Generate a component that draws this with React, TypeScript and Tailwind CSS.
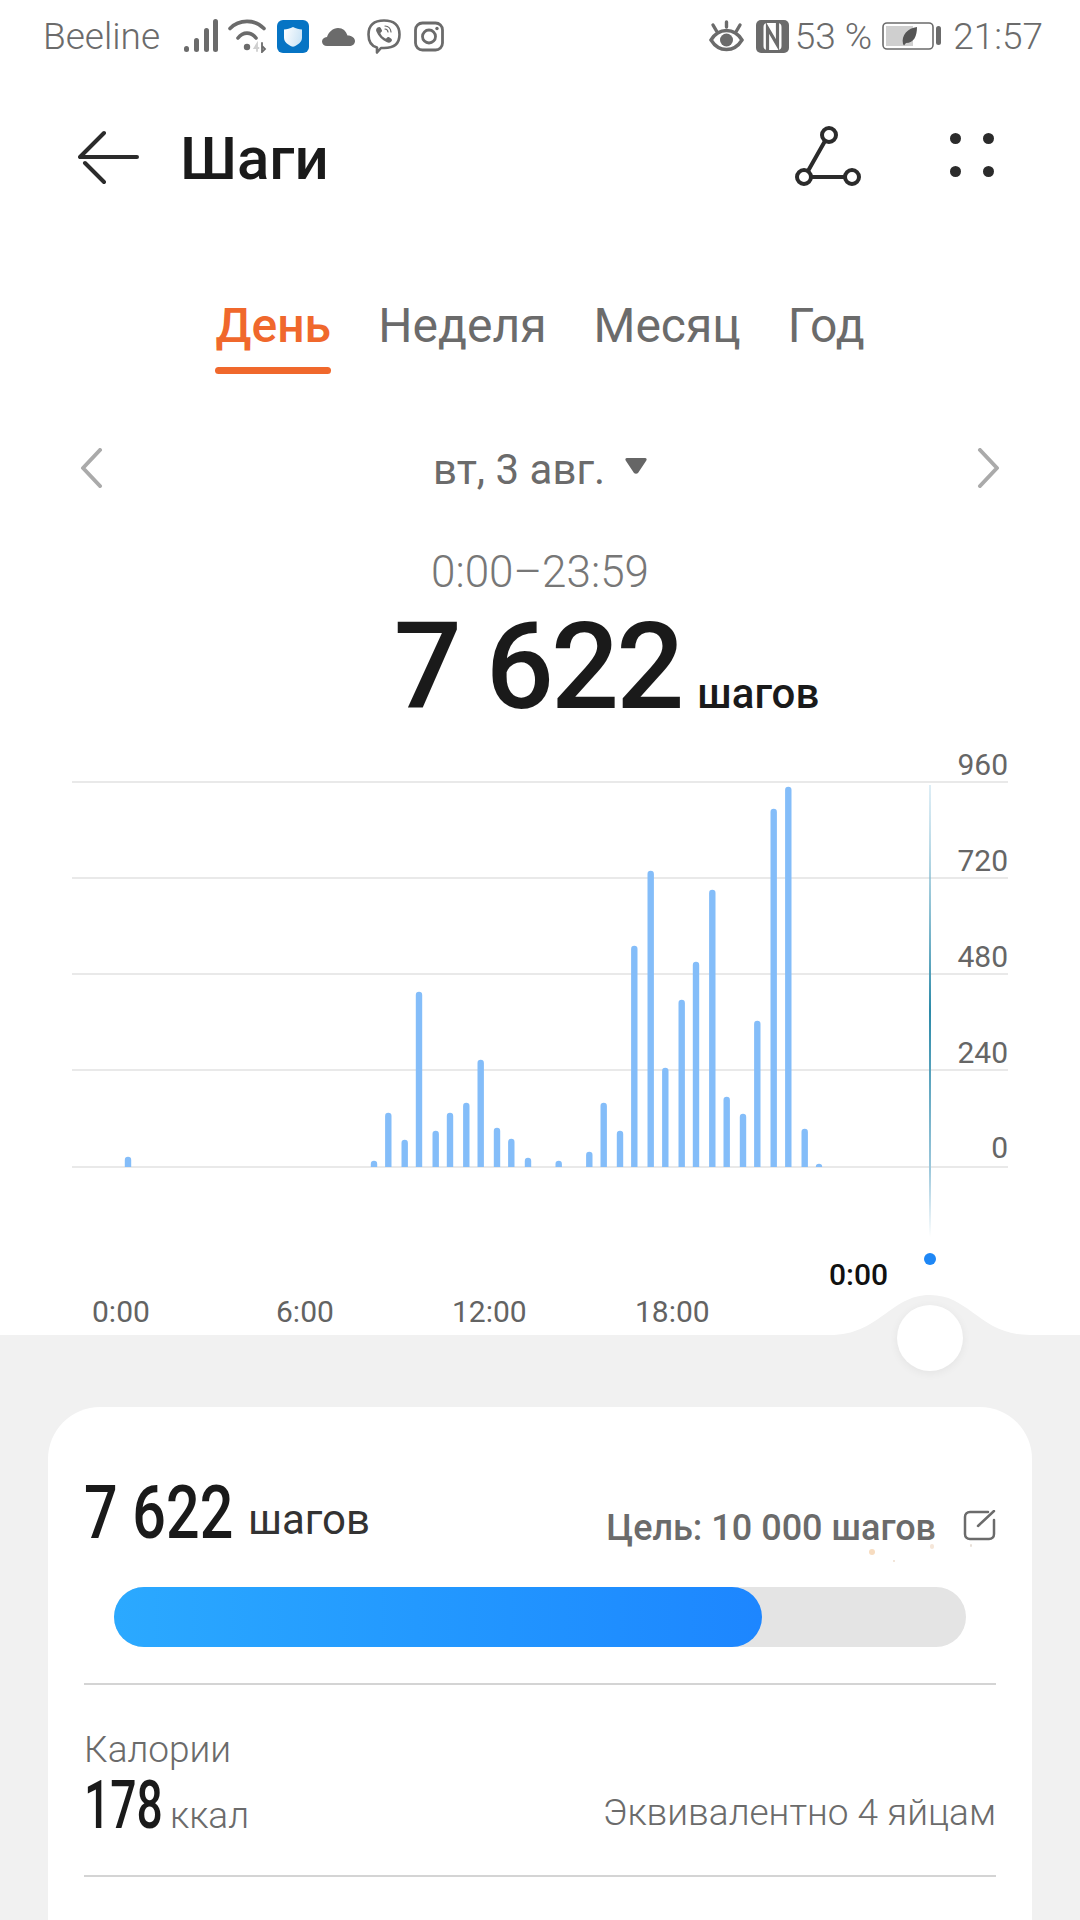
import React from "react";

const bars: [number, number][] = [
  [128, 1157], [374, 1161], [388.3, 1113], [404.7, 1140], [419, 992], [435.7, 1131], [450, 1113], [466.3, 1103], [480.7, 1060],
  [497, 1128], [511.3, 1139], [528, 1158], [558.7, 1161], [589.3, 1152], [603.7, 1103], [620, 1131], [634.3, 946], [650.7, 871],
  [665.3, 1068], [681.7, 1000], [696, 962], [712.3, 890], [726.7, 1097], [743, 1114], [757.3, 1021], [773.7, 809], [788.3, 787],
  [804.7, 1129], [819, 1164],
];

function Signal() {
  return (
    <svg width="36" height="34" viewBox="0 0 36 34" fill="#6b6b6b">
      <rect x="0" y="27" width="5" height="6" rx="2.5" />
      <rect x="10" y="19" width="5" height="14" rx="2.5" />
      <rect x="20" y="9" width="5" height="24" rx="2.5" />
      <rect x="29" y="0" width="5" height="33" rx="2.5" />
    </svg>
  );
}
function Wifi() {
  return (
    <svg width="40" height="34" viewBox="0 0 40 34" fill="none" stroke="#6b6b6b" strokeWidth="3.6" strokeLinecap="round">
      <path d="M2 9.500C11 0 27 0 36 9.500" />
      <path d="M10 19C15 12.500 23 12.500 28 19" />
      <circle cx="19" cy="28" r="3.200" fill="#6b6b6b" stroke="none" />
      <path d="M29 32v-7l-2.500 4h4" stroke="#cfcfcf" strokeWidth="1.800" />
      <path d="M34 24v9l3-3-3-3" strokeWidth="1.800" />
    </svg>
  );
}
function Shield() {
  return (
    <svg width="32" height="33" viewBox="0 0 32 33">
      <defs>
        <linearGradient id="sh" x1="0" y1="0" x2="1" y2="0.3">
          <stop offset="0" stopColor="#ffffff" />
          <stop offset="1" stopColor="#cfe6f6" />
        </linearGradient>
      </defs>
      <rect width="32" height="33" rx="6" fill="#0674c4" />
      <path d="M16 7c3 1.600 6 2.400 9 2.400v8c0 4.600-4 7.600-9 9.400-5-1.800-9-4.800-9-9.400v-8c3 0 6-.8 9-2.400z" fill="url(#sh)" />
    </svg>
  );
}
function Cloud() {
  return (
    <svg className="mt-[2px]" width="33" height="18" viewBox="0 0 33 18" fill="#6b6b6b">
      <path d="M5 18C2 18 0 16 0 13.500S2 9.500 5 9c1.500-5 6-9 11-9 5 0 8 3 9.500 7.500C30 7.500 33 10 33 13s-2.500 5-6 5z" />
    </svg>
  );
}
function Viber() {
  return (
    <svg width="34" height="35" viewBox="0 0 34 35" fill="none" stroke="#6b6b6b">
      <path d="M10 28.500C4 27 1.500 23 1.500 15.500 1.500 6 7 1.500 17 1.500S32.500 6 32.500 15.500 27 29 17 29c-1 0-2 0-3 0l-4 4.500z" strokeWidth="2.600" strokeLinejoin="round" />
      <path d="M10.500 8.500c1.500-1 2.500-.8 3.300.6l1 1.800c.5 1 .2 1.700-.8 2.400-.7.500-.7 1-.3 1.800 1 1.800 2.300 3.200 4.200 4.200.8.400 1.300.300 1.800-.4.700-1 1.500-1.200 2.500-.6l1.800 1.100c1.200.8 1.300 1.900.3 3-1.200 1.400-2.700 1.600-4.300.9-5.200-2.300-8.700-5.800-10.700-11-.6-1.500 0-2.800 1.200-3.800z" fill="#6b6b6b" stroke="none" />
      <path d="M18 7c3.500.3 5.700 2.500 6 6M18 10c1.800.2 2.800 1.200 3 3" strokeWidth="1.200" strokeLinecap="round" />
    </svg>
  );
}
function Instagram() {
  return (
    <svg width="30" height="31" viewBox="0 0 30 31" fill="none" stroke="#6b6b6b" strokeWidth="2.800">
      <rect x="1.500" y="2" width="27" height="27" rx="7" />
      <circle cx="15" cy="15.500" r="6.500" />
      <circle cx="23" cy="7.500" r="1.700" fill="#6b6b6b" stroke="none" />
    </svg>
  );
}
function Eye() {
  return (
    <svg width="35" height="32" viewBox="0 0 35 32" fill="none" stroke="#6b6b6b" strokeWidth="3.400" strokeLinecap="round">
      <path d="M2 20C6 13.500 11 10.500 17.500 10.500S29 13.500 33 20c-4 6.500-9 9.500-15.500 9.500S6 26.500 2 20z" />
      <circle cx="17.500" cy="20" r="6.500" fill="#6b6b6b" stroke="none" />
      <path d="M17.500 2v5M4 5l3.500 6M31 5l-3.500 6" />
    </svg>
  );
}
function Nfc() {
  return (
    <svg width="33" height="33" viewBox="0 0 33 33">
      <rect width="33" height="33" rx="5" fill="#6b6b6b" />
      <rect x="7.500" y="3" width="18" height="27" rx="4" fill="#fff" />
      <path d="M11.500 30V8L21.500 25V3" fill="none" stroke="#6b6b6b" strokeWidth="3.200" />
    </svg>
  );
}
function Battery() {
  return (
    <svg width="59" height="28" viewBox="0 0 59 28">
      <rect x="1" y="1" width="50" height="26" rx="4" fill="none" stroke="#6b6b6b" strokeWidth="1.600" />
      <rect x="4" y="4" width="27" height="20" fill="#cfcfcf" />
      <path d="M21 22c-2-9 5-16 14-17 0 9-3 16-11 16l-2 2.500z" fill="#555555" />
      <rect x="54" y="4" width="5" height="19" rx="2.500" fill="#6b6b6b" />
    </svg>
  );
}

export default function App() {
  return (
    <div className="relative flex h-[1920px] w-[1080px] flex-col overflow-hidden bg-white font-[Roboto,sans-serif] text-[#6b6b6b]">
      {/* status bar */}
      <div className="flex h-[72px] shrink-0 items-center pl-[43px] pr-[37px] text-[37px] font-light">
        <span className="w-[141px] leading-none">Beeline</span>
        <Signal />
        <span className="ml-[8px]"><Wifi /></span>
        <span className="ml-[9px]"><Shield /></span>
        <span className="ml-[13px]"><Cloud /></span>
        <span className="ml-[12px]"><Viber /></span>
        <span className="ml-[13px]"><Instagram /></span>
        <span className="ml-auto"><Eye /></span>
        <span className="ml-[12px]"><Nfc /></span>
        <span className="ml-[6px] leading-none">53 %</span>
        <span className="ml-[10px]"><Battery /></span>
        <span className="ml-[12px] leading-none">21:57</span>
      </div>

      {/* app bar */}
      <div className="flex h-[226px] shrink-0 items-start pl-[78px] pr-[86px] pt-[57px]">
        <svg className="mt-[1px]" width="62" height="58" viewBox="0 0 62 58" fill="none" stroke="#2b2b2b" strokeWidth="4" strokeLinecap="round" strokeLinejoin="round">
          <path d="M2 27H59M2 27L26 3M7 33L26 52" />
        </svg>
        <h1 className="ml-[40px] mt-[-4px] text-[60px] font-medium leading-[68px] text-[#1a1a1a]">Шаги</h1>
        <svg className="ml-auto mt-[-4px]" width="68" height="64" viewBox="0 0 68 64" fill="none" stroke="#2b2b2b" strokeWidth="4">
          <circle cx="35" cy="10" r="7" />
          <circle cx="10" cy="52" r="7" />
          <circle cx="58" cy="52" r="7" />
          <path d="M31 16L14 46M17 52H51" />
        </svg>
        <svg className="ml-[88px] mt-[4px]" width="44" height="44" viewBox="0 0 44 44" fill="#2b2b2b">
          <circle cx="5.500" cy="5.500" r="5.500" />
          <circle cx="38.500" cy="5.500" r="5.500" />
          <circle cx="5.500" cy="38.500" r="5.500" />
          <circle cx="38.500" cy="38.500" r="5.500" />
        </svg>
      </div>

      {/* tabs */}
      <div className="flex h-[134px] shrink-0 justify-center text-[48px] leading-[56px]">
        <div className="flex w-[116px] flex-col items-center font-medium text-[#f0682c]">
          <span>День</span>
          <span className="mt-[13px] h-[7px] w-full rounded-full bg-[#f0682c]" />
        </div>
        <span className="ml-[47px]">Неделя</span>
        <span className="ml-[47px]">Месяц</span>
        <span className="ml-[47px]">Год</span>
      </div>

      {/* date */}
      <div className="flex h-[76px] shrink-0 items-center justify-between px-[79px]">
        <svg className="mb-[4px]" width="24" height="40" viewBox="0 0 24 40" fill="none" stroke="#aaaaaa" strokeWidth="4" strokeLinecap="round" strokeLinejoin="round">
          <path d="M21 2L4 20L21 38" />
        </svg>
        <div className="flex items-center text-[42px] leading-[48px]">
          <span>вт, 3 авг.</span>
          <svg className="mb-[8px] ml-[20px]" width="22" height="16" viewBox="0 0 22 16" fill="#666666">
            <path d="M2 0H20C22 0 22 2 21 3L13 15C12 16 10 16 9 15L1 3C0 2 0 0 2 0Z" />
          </svg>
        </div>
        <svg className="mb-[4px]" width="24" height="40" viewBox="0 0 24 40" fill="none" stroke="#aaaaaa" strokeWidth="4" strokeLinecap="round" strokeLinejoin="round">
          <path d="M3 2L20 20L3 38" />
        </svg>
      </div>

      {/* totals */}
      <div className="mt-[40px] shrink-0 text-center text-[44px] font-light leading-[48px] text-[#777777]">0:00–23:59</div>
      <div className="mt-[16px] flex h-[124px] shrink-0 items-baseline justify-center pl-[133px] text-[#1a1a1a]">
        <span className="text-[120px] font-medium leading-[110px] tracking-[-3px]">7 622</span>
        <span className="ml-[16px] text-[42px] font-medium leading-none">шагов</span>
      </div>

      {/* chart */}
      <div className="relative h-[599px] shrink-0">
        <svg className="absolute inset-0" width="1080" height="599" viewBox="0 736 1080 599">
          <defs>
            <linearGradient id="cursor" x1="0" y1="0" x2="0" y2="1">
              <stop offset="0" stopColor="#bcdcec" stopOpacity="0.5" />
              <stop offset="0.5" stopColor="#2c8aa8" />
              <stop offset="0.85" stopColor="#9cc8dc" />
              <stop offset="1" stopColor="#ffffff" />
            </linearGradient>
          </defs>
          {[782, 878, 974, 1070, 1167].map((y) => (
            <rect key={y} x="72" y={y - 0.75} width="936" height="1.5" fill="#e2e2e2" />
          ))}
          {bars.map(([x, top]) => (
            <path key={x} d={`M${x - 3.2} 1167V${top + 3}a3.200 3.200 0 0 1 6.400 0V1167Z`} fill="#84bdf9" />
          ))}
          <rect x="929" y="785" width="2" height="452" fill="url(#cursor)" />
          <circle cx="930" cy="1259" r="6" fill="#1e87f5" />
          <path d="M800 1335H830C880 1335 890 1295 930 1295S980 1335 1030 1335H1060V1336H800Z" fill="#f1f1f1" />
        </svg>
        {[
          ["960", "top-[11px]"],
          ["720", "top-[107px]"],
          ["480", "top-[203px]"],
          ["240", "top-[299px]"],
          ["0", "top-[394px]"],
        ].map(([t, c]) => (
          <span key={t} className={`absolute right-[72px] text-[30px] leading-[36px] text-[#666666] ${c}`}>{t}</span>
        ))}
        <div className="absolute bottom-[5px] left-0 h-[36px] w-full text-[30px] leading-[36px] text-[#636363]">
          <span className="absolute left-[92px]">0:00</span>
          <span className="absolute left-[276px]">6:00</span>
          <span className="absolute left-[452px]">12:00</span>
          <span className="absolute left-[635px]">18:00</span>
        </div>
        <span className="absolute bottom-[42px] left-[829px] text-[30px] font-medium leading-[36px] text-[#111111]">0:00</span>
      </div>

      {/* lower panel */}
      <div className="relative h-[585px] shrink-0 bg-[#f1f1f1] px-[48px] pt-[72px]">
        <div className="absolute left-[897px] top-[-30px] h-[66px] w-[66px] rounded-full bg-white shadow-[0_2px_10px_rgba(0,0,0,0.06)]" />
        <div className="h-[600px] rounded-t-[52px] bg-white px-[36px] pt-[61px]">
          <div className="flex h-[90px] items-baseline">
            <span className="w-[148px] origin-left scale-x-[0.8] whitespace-nowrap text-[74px] font-medium leading-[90px] text-[#1a1a1a]">7 622</span>
            <span className="ml-[16px] -translate-y-[4px] text-[42px] leading-none text-[#333333]">шагов</span>
            <span className="ml-auto translate-y-[2px] text-[36px] font-medium leading-none text-[#6b6b6b]">Цель: 10 000 шагов</span>
            <svg className="ml-[27px] mt-[24px] self-center" width="33" height="31" viewBox="0 0 33 31" fill="none" stroke="#6b6b6b" strokeWidth="2.500" strokeLinecap="round">
              <path d="M25 2H7C4 2 2 4 2 7V24C2 27 4 29 7 29H26C29 29 31 27 31 24V10" />
              <path d="M15 16L31 1" />
            </svg>
          </div>
          <div className="mx-[30px] mt-[29px] h-[60px] rounded-full bg-[#e4e4e4]">
            <div className="h-full w-[648px] rounded-full bg-gradient-to-r from-[#2ba9ff] to-[#1d86ff]" />
          </div>
          <div className="mt-[36px] border-t-2 border-[#d4d4d4] pt-[39px]">
            <div className="text-[37px] font-light leading-[52px] text-[#6b6b6b]">Калории</div>
            <div className="flex h-[60px] items-baseline">
              <span className="w-[77px] origin-left scale-x-[0.7] whitespace-nowrap text-[66px] font-medium leading-[60px] text-[#1a1a1a]">178</span>
              <span className="ml-[9px] text-[37px] font-light leading-none">ккал</span>
              <span className="ml-auto -translate-y-[3px] text-[37px] font-light leading-none">Эквивалентно 4 яйцам</span>
            </div>
          </div>
          <div className="mt-[39px] border-t-2 border-[#d4d4d4]" />
        </div>
        <span className="absolute left-[869px] top-[214px] h-[6px] w-[6px] rounded-full bg-[#f7dcc0]" />
        <span className="absolute left-[893px] top-[225px] h-[2px] w-[2px] rounded-full bg-[#eedccc]" />
        <span className="absolute left-[930px] top-[209px] h-[5px] w-[4px] rounded-full bg-[#f5e6d8]" />
        <span className="absolute left-[970px] top-[209px] h-[3px] w-[2px] rounded-full bg-[#e8e0d8]" />
      </div>
    </div>
  );
}
